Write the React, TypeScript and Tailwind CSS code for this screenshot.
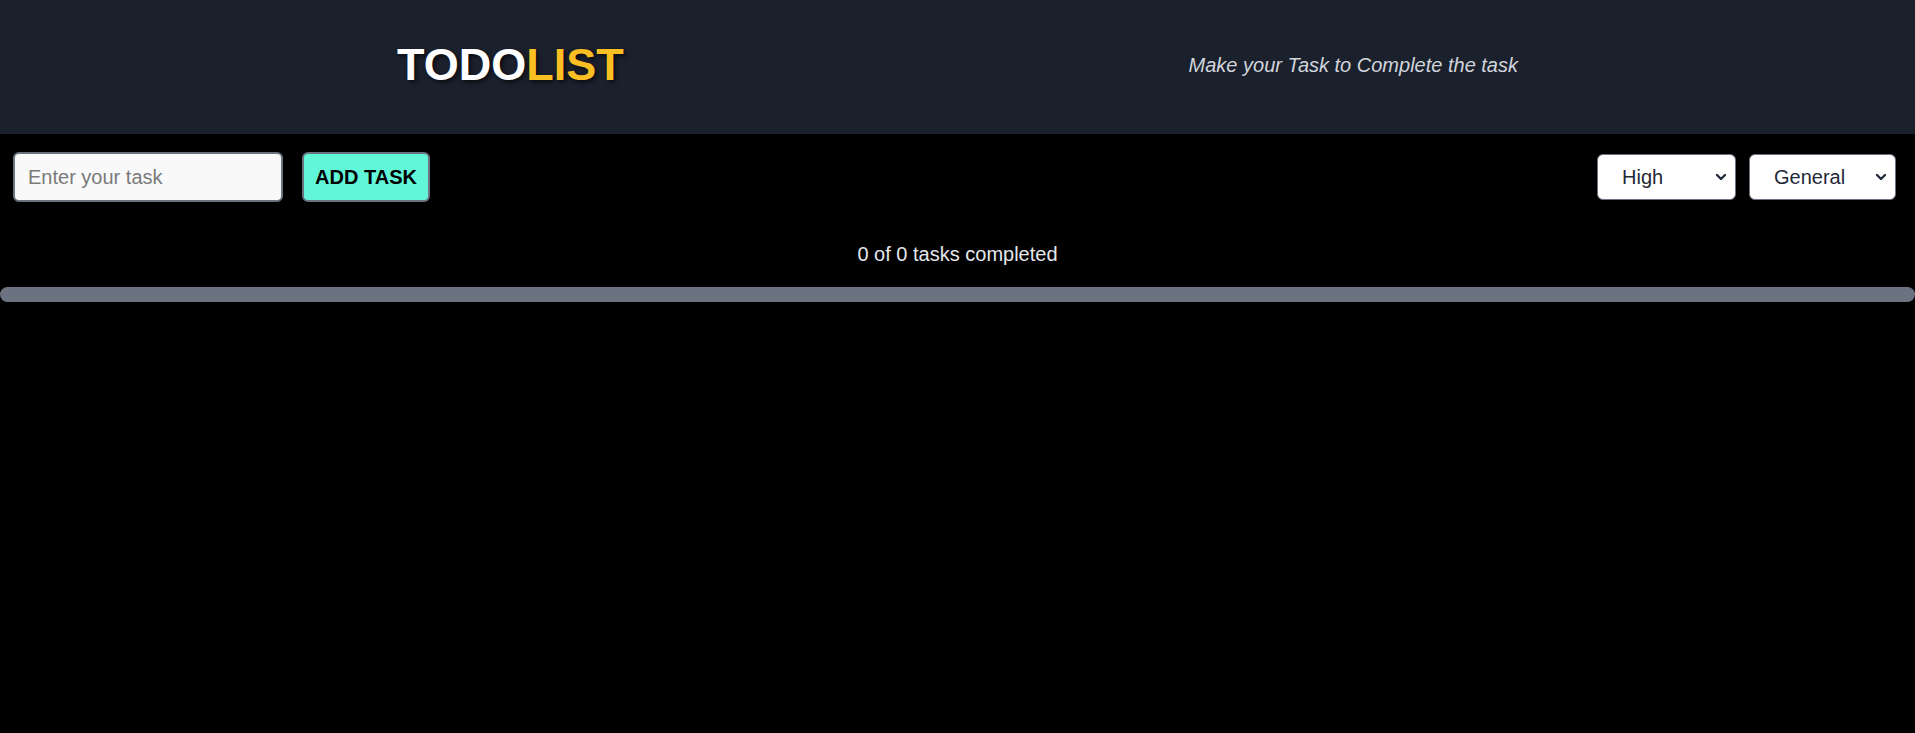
import { ChevronDown } from "lucide-react";

export default function App() {
	return (
		<div className="min-h-screen bg-black font-['Liberation_Sans',Arial,sans-serif]">
			{/* Header */}
			<header className="flex h-[134px] items-center justify-between bg-[#1b202d] px-[397px] pb-[5px]">
				<h1 className="text-[45px] font-bold leading-none tracking-normal [text-shadow:2px_2px_4px_rgba(0,0,0,0.7)]">
					<span className="text-white">TODO</span>
					<span className="text-[#fbbf24]">LIST</span>
				</h1>
				<p className="text-[20px] italic text-[#d1d5db]">Make your Task to Complete the task</p>
			</header>

			{/* Controls */}
			<div className="mt-[18px] flex items-center justify-between pl-[13px] pr-[19px]">
				<div className="flex items-center gap-[19px]">
					<input
						type="text"
						placeholder="Enter your task"
						className="h-[50px] w-[270px] rounded-md border-2 border-[#6b7280] bg-[#f9f9f9] px-[13px] text-[20px] text-black placeholder:text-[#7a7a7a] outline-none"
					/>
					<button className="h-[50px] w-[128px] rounded-md border-2 border-[#6b7280] bg-[#62f6d9] text-[20px] font-bold text-black">
						ADD TASK
					</button>
				</div>
				<div className="flex items-center gap-[13px]">
					{[
						{ label: "High", w: "w-[139px]" },
						{ label: "General", w: "w-[147px]" },
					].map((s) => (
						<div key={s.label} className={`relative ${s.w}`}>
							<select className="h-[46px] w-full appearance-none rounded-md border border-[#6b7280] bg-white pl-[24px] text-[20px] text-[#1f2937] outline-none">
								<option>{s.label}</option>
							</select>
							<ChevronDown className="pointer-events-none absolute right-[7px] top-1/2 h-[16px] w-[16px] -translate-y-1/2 text-[#1f2937]" strokeWidth={3.5} />
						</div>
					))}
				</div>
			</div>

			{/* Progress */}
			<p className="mt-[37px] text-center text-[20px] text-[#e5e7eb]">0 of 0 tasks completed</p>
			<div className="mt-[18px] h-[15px] w-full rounded-full bg-[#6b7280]" />
		</div>
	);
}
